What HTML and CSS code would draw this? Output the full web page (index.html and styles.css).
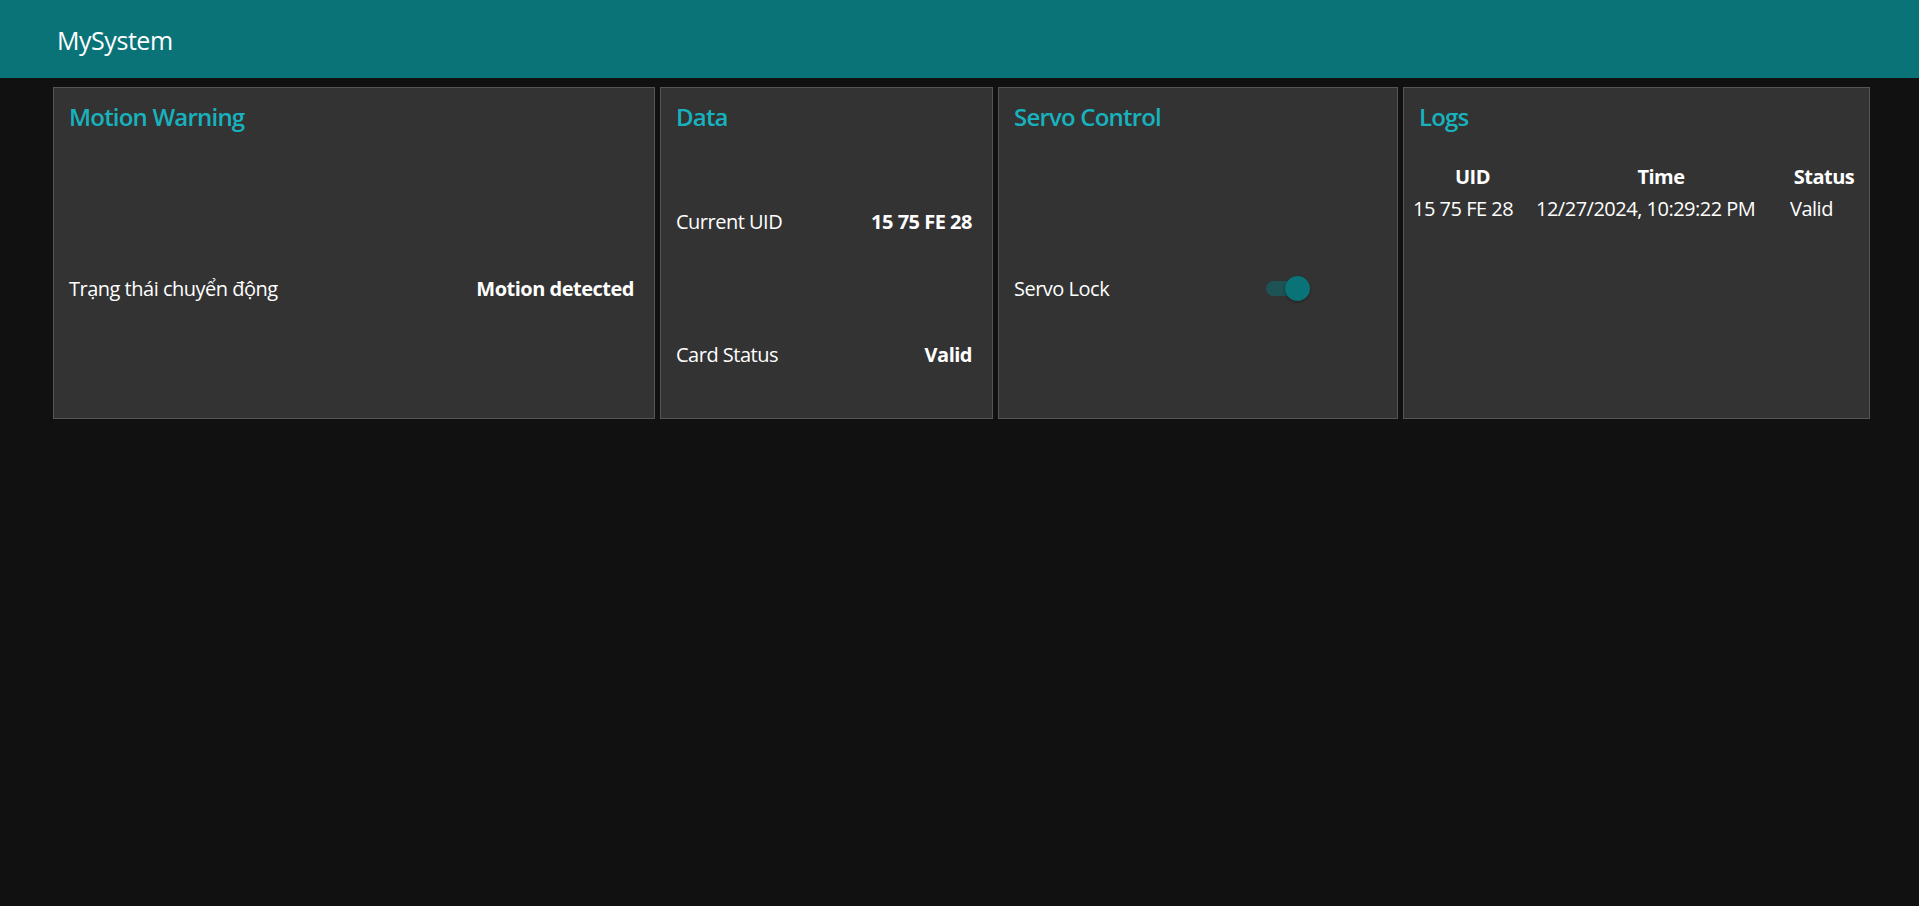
FILE: index.html
```html
<!DOCTYPE html>
<html lang="vi">
<head>
<meta charset="utf-8">
<title>MySystem</title>
<link rel="stylesheet" href="styles.css">
</head>
<body>
<header class="topbar">
  <span class="brand">MySystem</span>
</header>
<main class="dashboard">
  <section class="card">
    <h2 class="card-title">Motion Warning</h2>
    <div class="card-body">
      <div class="row"><span>Trạng thái chuyển động</span><strong>Motion detected</strong></div>
    </div>
  </section>
  <section class="card">
    <h2 class="card-title">Data</h2>
    <div class="card-body">
      <div class="row"><span>Current UID</span><strong>15 75 FE 28</strong></div>
      <div class="row"><span>Card Status</span><strong>Valid</strong></div>
    </div>
  </section>
  <section class="card">
    <h2 class="card-title">Servo Control</h2>
    <div class="card-body">
      <div class="row servo-row">
        <span class="servo-label">Servo Lock</span>
        <span class="switch" role="switch" aria-checked="true"><span class="track"></span><span class="thumb"></span></span>
      </div>
    </div>
  </section>
  <section class="card">
    <h2 class="card-title">Logs</h2>
    <div class="logs-body">
      <table class="logs">
        <colgroup><col class="c-uid"><col class="c-time"><col class="c-status"></colgroup>
        <thead><tr><th>UID</th><th>Time</th><th>Status</th></tr></thead>
        <tbody><tr><td>15 75 FE 28</td><td>12/27/2024, 10:29:22 PM</td><td>Valid</td></tr></tbody>
      </table>
    </div>
  </section>
</main>
</body>
</html>
```

FILE: styles.css
```css
html, body {
  margin: 0;
  padding: 0;
}
body {
  background: #111111;
  color: #ffffff;
  font-family: "Open Sans", "Noto Sans", "Liberation Sans", sans-serif;
  font-size: 20px;
  letter-spacing: -0.5px;
  min-height: 906px;
}
.topbar {
  height: 78px;
  box-sizing: border-box;
  background: #0a7378;
  padding: 25px 0 0 57px;
  display: flex;
  align-items: flex-start;
}
.brand {
  font-size: 25px;
  line-height: 30px;
  letter-spacing: -0.45px;
  color: #ffffff;
}
.dashboard {
  display: grid;
  grid-template-columns: 602px 333px 400px 467px;
  column-gap: 5px;
  padding: 9px 49px 0 53px;
}
.card {
  height: 332px;
  box-sizing: border-box;
  background: #333333;
  border: 1px solid #555555;
  padding: 14px 15px 0;
  display: flex;
  flex-direction: column;
}
.card-title {
  margin: 0 0 24px;
  font-size: 24px;
  line-height: 29px;
  font-weight: 600;
  letter-spacing: -0.8px;
  color: #17b2bd;
}
.card-body {
  flex: 1;
  display: flex;
  flex-direction: column;
  justify-content: space-around;
  margin-bottom: -4px;
}
.row {
  display: flex;
  justify-content: space-between;
  align-items: center;
  line-height: 30px;
  padding-right: 5px;
}
.row strong {
  font-weight: 700;
}
.servo-row {
  justify-content: flex-start;
}
.servo-label {
  flex: 0 0 252px;
}
.switch {
  position: relative;
  width: 44px;
  height: 25px;
  display: inline-block;
}
.track {
  position: absolute;
  left: 0;
  top: 5px;
  width: 42px;
  height: 15px;
  border-radius: 8px;
  background: rgba(10, 115, 120, 0.5);
}
.thumb {
  position: absolute;
  left: 19px;
  top: 0;
  width: 25px;
  height: 25px;
  border-radius: 50%;
  background: #0a7378;
  box-shadow: 0 1px 3px rgba(0, 0, 0, 0.4);
}
.logs-body {
  flex: 1;
}
.logs {
  margin: 6px 0 0 -8px;
  width: 449px;
  table-layout: fixed;
  border-collapse: collapse;
}
.c-uid { width: 123px; }
.c-time { width: 254px; }
.c-status { width: 72px; }
.logs th,
.logs td {
  padding: 0 2px;
  line-height: 32px;
  font-size: 20px;
  white-space: nowrap;
}
.logs th {
  font-weight: 700;
  text-align: center;
}
.logs td {
  text-align: left;
}
```
